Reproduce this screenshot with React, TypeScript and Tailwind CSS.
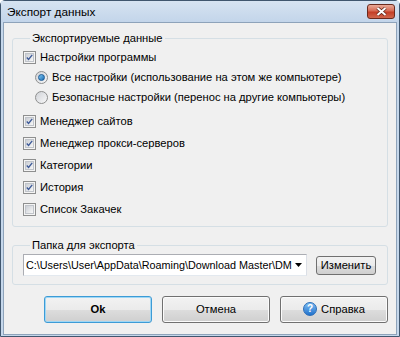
import React from 'react';

const FONT = { fontFamily: '"Liberation Sans", Arial, sans-serif' };

function CheckBox({ checked }: { checked: boolean }) {
  return (
    <span className="flex h-[13px] w-[13px] shrink-0 items-center justify-center border border-[#8e8f8f] bg-[#f4f4f4]">
      <span className="flex h-[9px] w-[9px] items-center justify-center border border-[#c0c4ca] bg-gradient-to-br from-[#cbcfd5] to-[#f7f7f7]">
        {checked && (
          <svg width="9" height="9" viewBox="0 0 9 9">
            <path d="M1 4.5 L3.3 7 L8 1.2" fill="none" stroke="#3d5a98" strokeWidth="1.7" />
          </svg>
        )}
      </span>
    </span>
  );
}

function Radio({ checked }: { checked: boolean }) {
  return (
    <span className="flex h-[13px] w-[13px] shrink-0 items-center justify-center rounded-full border border-[#8e8f8f] bg-gradient-to-br from-[#d0d3d8] to-[#f8f8f8]">
      {checked && (
        <span className="h-[7px] w-[7px] rounded-full border border-[#1b5a95] bg-gradient-to-br from-[#7cc6f2] to-[#1a6fb5]" />
      )}
    </span>
  );
}

function CheckRow({ label, checked, tall }: { label: string; checked: boolean; tall?: boolean }) {
  return (
    <div className={`flex items-center gap-[4px] ${tall ? 'h-[22px]' : 'h-[20px]'}`}>
      <CheckBox checked={checked} />
      <span>{label}</span>
    </div>
  );
}

function RadioRow({ label, checked }: { label: string; checked: boolean }) {
  return (
    <div className="flex h-[20px] items-center gap-[4px] pl-[12px]">
      <Radio checked={checked} />
      <span>{label}</span>
    </div>
  );
}

function Button({ children, focused }: { children: React.ReactNode; focused?: boolean }) {
  return (
    <div
      className={`flex h-[27px] w-[108px] items-center justify-center rounded-[3px] border ${
        focused ? 'border-[#3c9bd6] shadow-[inset_0_0_0_1px_#9fd7f5]' : 'border-[#707070] shadow-[inset_0_0_0_1px_#fbfbfb]'
      } bg-[linear-gradient(#f2f2f2_0%,#ebebeb_50%,#dddddd_51%,#cfcfcf_100%)]`}
    >
      {children}
    </div>
  );
}

export default function App() {
  return (
    <div
      className="flex h-[337px] w-[400px] flex-col rounded-t-[5px] border border-[#40566e] bg-[#c5d7eb] text-[11.2px] text-black"
      style={FONT}
    >
      <div className="flex h-[21px] shrink-0 items-start justify-between bg-gradient-to-b from-[#d6e3f1] to-[#c3d5ea] pl-[6px] pr-[4px]">
        <span className="pt-[4px] text-[11.8px] leading-[15px]">Экспорт данных</span>
        <div className="mt-[3px] flex h-[15px] w-[28px] items-center justify-center rounded-[3px] border border-[#6b2a1d] bg-[linear-gradient(#e9aa98_0%,#d66a53_45%,#c43e26_55%,#d0674d_100%)]">
          <svg width="13" height="9" viewBox="0 0 13 9">
            <path d="M2.5 1 L10.5 8 M10.5 1 L2.5 8" stroke="#5a2418" strokeWidth="3.4" />
            <path d="M2.5 1 L10.5 8 M10.5 1 L2.5 8" stroke="#ffffff" strokeWidth="2" />
          </svg>
        </div>
      </div>

      <div className="mx-[2px] mb-[1px] flex flex-1 flex-col border border-[#8ea3ba] bg-[#f0f0f0] px-[8px]">
        <fieldset className="mt-[8px] rounded-[3px] border border-[#d5dfe5] px-[10px] pb-[6px] pt-[1px]">
          <legend className="ml-[7px] px-[2px] leading-[15px]">Экспортируемые данные</legend>
          <CheckRow label="Настройки программы" checked />
          <RadioRow label="Все настройки (использование на этом же компьютере)" checked />
          <RadioRow label="Безопасные настройки (перенос на другие компьютеры)" checked={false} />
          <div className="mt-[3px]">
            <CheckRow label="Менеджер сайтов" checked tall />
            <CheckRow label="Менеджер прокси-серверов" checked tall />
            <CheckRow label="Категории" checked tall />
            <CheckRow label="История" checked tall />
            <CheckRow label="Список Закачек" checked={false} tall />
          </div>
        </fieldset>

        <fieldset className="mt-[11px] rounded-[3px] border border-[#d5dfe5] pb-[8px] pl-[10px] pr-[11px] pt-[1px]">
          <legend className="ml-[7px] px-[2px] leading-[15px]">Папка для экспорта</legend>
          <div className="flex items-center gap-[9px]">
            <div className="flex h-[22px] w-[284px] items-center justify-between border border-[#abadb3] border-b-[#e3e9ef] border-r-[#dbdfe6] bg-white pl-[2px] pr-[4px]">
              <span className="whitespace-nowrap text-[10.8px]">C:\Users\User\AppData\Roaming\Download Master\DM</span>
              <svg className="shrink-0" width="7" height="4" viewBox="0 0 7 4">
                <path d="M0 0 H7 L3.5 4 Z" fill="#000" />
              </svg>
            </div>
            <div className="flex h-[19px] w-[60px] items-center justify-center rounded-[3px] border border-[#707070] bg-[linear-gradient(#f2f2f2_0%,#ebebeb_50%,#dddddd_51%,#cfcfcf_100%)]">
              Изменить
            </div>
          </div>
        </fieldset>

        <div className="mt-[11px] flex justify-end gap-[10px]">
          <Button focused>
            <span className="font-bold">Ok</span>
          </Button>
          <Button>Отмена</Button>
          <Button>
            <span className="flex items-center gap-[4px]">
              <span className="flex h-[14px] w-[14px] items-center justify-center rounded-full border border-[#2a6cb8] bg-gradient-to-b from-[#7dbdf2] to-[#1f72cc] text-[10px] font-bold leading-none text-white">
                ?
              </span>
              Справка
            </span>
          </Button>
        </div>
      </div>
    </div>
  );
}
